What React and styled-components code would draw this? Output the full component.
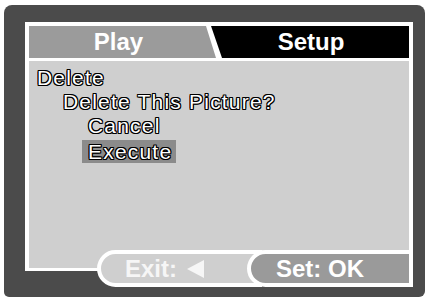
import styled, { createGlobalStyle } from "styled-components";

const GlobalStyle = createGlobalStyle`
  html, body {
    margin: 0;
    padding: 0;
    background: #ffffff;
  }
  body {
    padding: 5px 3px 2px 4px;
    font-family: "Liberation Sans", Arial, sans-serif;
  }
`;

// dark camera lcd frame
const Frame = styled.div`
  width: 421px;
  height: 292px;
  box-sizing: border-box;
  background: #4b4b4b;
  border-radius: 8px 8px 6px 5px;
  padding: 17px 12px 10px 21px;
  display: flex;
  flex-direction: column;
`;

const Panel = styled.div`
  height: 249px;
  box-sizing: border-box;
  background: #ffffff;
  padding: 4px 4px 3px 4px;
  display: flex;
  flex-direction: column;
  gap: 3px;
`;

const TabRow = styled.div`
  display: flex;
  height: 32px;
`;

const Tab = styled.div`
  display: flex;
  align-items: center;
  justify-content: center;
  color: #ffffff;
  font-size: 24px;
  font-weight: 700;
  line-height: 1;
`;

const PlayTab = styled(Tab)`
  width: 187px;
  flex: none;
  background: #9b9b9b;
  clip-path: polygon(0 0, calc(100% - 10px) 0, 100% 100%, 0 100%);
  padding-right: 8px;
  box-sizing: border-box;
`;

const SetupTab = styled(Tab)`
  flex: 1;
  margin-left: -5px;
  background: #000000;
  clip-path: polygon(0 0, 100% 0, 100% 100%, 11px 100%);
  padding-left: 2px;
`;

const Content = styled.div`
  flex: 1;
  background: #cfcfcf;
  padding: 4px 0 0 2px;
  display: flex;
  flex-direction: column;
`;

const Line = styled.div`
  height: 24px;
  padding-left: ${(p) => p.$indent}px;
  display: flex;
  align-items: center;
`;

const Item = styled.span`
  display: inline-block;
  padding: 1px 4px 1px 6px;
  margin-top: ${(p) => (p.$active ? "4px" : "0")};
  background: ${(p) => (p.$active ? "#8b8b8b" : "transparent")};
  font-size: 21px;
  line-height: 21px;
  letter-spacing: 1.2px;
  color: #ffffff;
  text-shadow: -1px -1px 0 #000, 1px -1px 0 #000, -1px 1px 0 #000,
    1px 1px 0 #000, 0 1px 0 #000, 0 -1px 0 #000, 1px 0 0 #000, -1px 0 0 #000;
`;

const Footer = styled.div`
  display: flex;
  margin-top: -21px;
  padding-left: 72px;
`;

const Pill = styled.div`
  height: 37px;
  box-sizing: border-box;
  border: 4px solid #ffffff;
  border-radius: 19px 0 0 19px;
  display: flex;
  align-items: center;
  gap: 10px;
  color: #ffffff;
  font-size: 24px;
  font-weight: 700;
`;

const ExitPill = styled(Pill)`
  width: 165px;
  background: #cfcfcf;
  padding-left: 24px;
  color: #f6f6f6;
`;

const SetPill = styled(Pill)`
  flex: 1;
  margin-left: -15px;
  background: #9a9a9a;
  padding-left: 25px;
`;

const LeftArrow = () => (
  <svg width="18" height="18" viewBox="0 0 18 18">
    <polygon points="17,0 17,18 0,9" fill="#f6f6f6" />
  </svg>
);

const App = () => {
  return (
    <>
      <GlobalStyle />
      <Frame>
        <Panel>
          <TabRow>
            <PlayTab>Play</PlayTab>
            <SetupTab>Setup</SetupTab>
          </TabRow>
          <Content>
            <Line $indent={0}>
              <Item>Delete</Item>
            </Line>
            <Line $indent={26}>
              <Item>Delete This Picture?</Item>
            </Line>
            <Line $indent={51}>
              <Item>Cancel</Item>
            </Line>
            <Line $indent={51}>
              <Item $active>Execute</Item>
            </Line>
          </Content>
        </Panel>
        <Footer>
          <ExitPill>
            Exit: <LeftArrow />
          </ExitPill>
          <SetPill>Set: OK</SetPill>
        </Footer>
      </Frame>
    </>
  );
};

export default App;
